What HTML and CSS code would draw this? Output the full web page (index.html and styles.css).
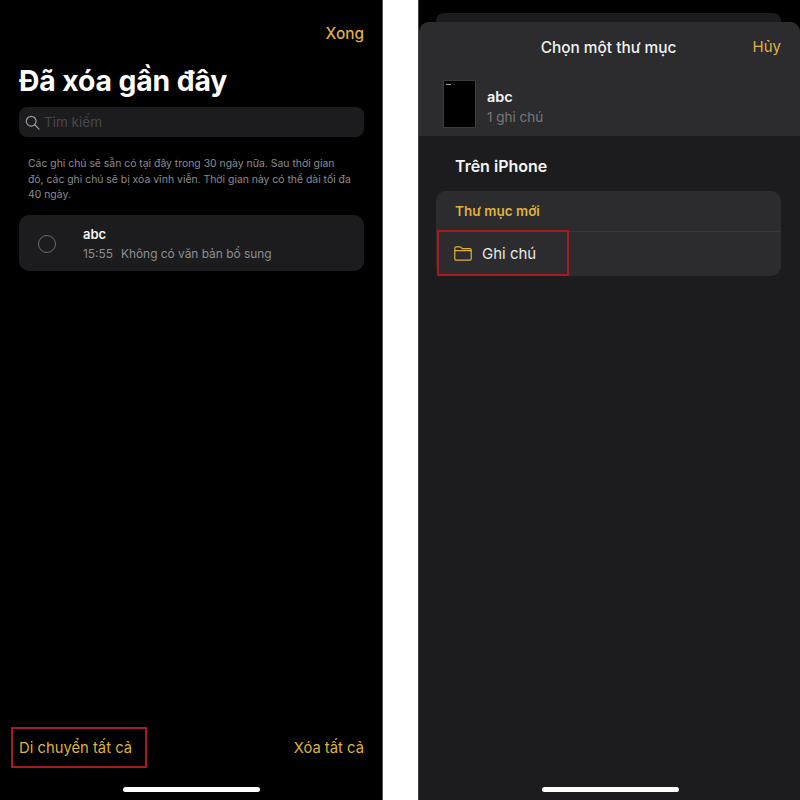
FILE: index.html
```html
<!DOCTYPE html>
<html lang="vi">
<head>
<meta charset="utf-8">
<title>Đã xóa gần đây</title>
<link rel="stylesheet" href="styles.css">
</head>
<body>
<main class="stage">
  <section class="phone phone-left">
    <div class="top-action"><span class="accent done">Xong</span></div>
    <h1 class="title">Đã xóa gần đây</h1>
    <div class="search">
      <svg class="search-icon" viewBox="0 0 16 16" fill="none" stroke="#9a9a9e" stroke-width="1.3" stroke-linecap="round"><circle cx="6.6" cy="6.6" r="5.2"/><path d="M10.4 10.4 15 15"/></svg>
      <span class="search-text">Tìm kiếm</span>
    </div>
    <p class="note">Các ghi chú sẽ sẵn có tại đây trong 30 ngày nữa. Sau thời gian đó, các ghi chú sẽ bị xóa vĩnh viễn. Thời gian này có thể dài tối đa 40 ngày.</p>
    <div class="note-card">
      <span class="radio"></span>
      <div class="note-body">
        <div class="note-name">abc</div>
        <div class="note-meta"><span>15:55</span><span>Không có văn bản bổ sung</span></div>
      </div>
    </div>
    <div class="toolbar">
      <span class="accent tool tool-marked">Di chuyển tất cả</span>
      <span class="accent tool">Xóa tất cả</span>
    </div>
    <div class="home-bar"></div>
  </section>

  <section class="phone phone-right">
    <div class="behind"></div>
    <div class="sheet">
      <div class="sheet-head">
        <div class="sheet-nav">
          <span class="sheet-title">Chọn một thư mục</span>
          <span class="accent cancel">Hủy</span>
        </div>
        <div class="selected">
          <div class="thumb"><span class="thumb-line"></span></div>
          <div>
            <div class="selected-name">abc</div>
            <div class="selected-count">1 ghi chú</div>
          </div>
        </div>
      </div>
      <h2 class="section-title">Trên iPhone</h2>
      <div class="folders">
        <div class="new-folder">Thư mục mới</div>
        <div class="folder-row">
          <svg class="folder-icon" viewBox="0 0 18 15" fill="none" stroke="#dfb23f" stroke-width="1.2" stroke-linejoin="round"><path d="M.8 3V2.2C.8 1.4 1.4.8 2.2.8h3.6c.5 0 .8.2 1.1.5L8.3 2.6h7.5c.8 0 1.4.6 1.4 1.4v8.8c0 .8-.6 1.4-1.4 1.4H2.2c-.8 0-1.4-.6-1.4-1.4V3Z"/><path d="M.8 4.7h16.4"/></svg>
          <span class="folder-name">Ghi chú</span>
        </div>
        <div class="highlight"></div>
      </div>
    </div>
    <div class="home-bar"></div>
  </section>
</main>
</body>
</html>
```
FILE: styles.css
```css
* { box-sizing: border-box; }
html, body { margin: 0; padding: 0; }
body {
  width: 800px;
  height: 800px;
  overflow: hidden;
  background: #fff;
  font-family: Inter, "Noto Sans", "Liberation Sans", sans-serif;
  color: #fff;
}
.stage {
  display: flex;
  justify-content: space-between;
  width: 800px;
  height: 800px;
}
.phone {
  position: relative;
  width: 382px;
  height: 800px;
  background: #000;
  display: flex;
  flex-direction: column;
}
.phone-left { padding: 0 18px 0 19px; border-right: 1px solid #555; width: 383px; }
.phone-right { border-left: 1px solid #444; }
.accent { color: #dfb23f; }

.top-action {
  display: flex;
  justify-content: flex-end;
  padding-top: 25px;
  height: 53px;
}
.done { font-size: 15.4px; font-weight: 500; line-height: 18px; }
.title {
  margin: 11px 0 0;
  font-size: 28.3px;
  line-height: 34px;
  font-weight: 700;
  letter-spacing: -0.1px;
  height: 43px;
}
.search {
  display: flex;
  align-items: center;
  gap: 4px;
  height: 30px;
  background: #1c1c1e;
  border-radius: 8px;
  padding-left: 6px;
}
.search-icon { width: 15px; height: 15px; flex: none; }
.search-text { font-size: 13.5px; color: #48484b; }
.note {
  margin: 19px 0 0;
  padding: 0 12px 0 9px;
  font-size: 10.4px;
  line-height: 15.5px;
  color: #8c8c90;
  height: 51px;
}
.note-card {
  margin-top: 8px;
  height: 56px;
  background: #1c1c1e;
  border-radius: 10px;
  display: flex;
  align-items: center;
  padding-left: 19px;
}
.radio {
  width: 18px;
  height: 18px;
  flex: none;
  border: 1px solid #6a6a6d;
  border-radius: 50%;
  margin-top: 1px;
}
.note-body { margin-left: 27px; }
.note-name { font-size: 13px; line-height: 18px; font-weight: 600; color: #f5f5f5; padding-top: 1px; }
.note-meta {
  display: flex;
  gap: 8px;
  margin-top: 2px;
  font-size: 11.9px;
  line-height: 17px;
  color: #8e8e92;
}
.toolbar {
  margin: auto 0 0 -8px;
  height: 41px;
  display: flex;
  justify-content: space-between;
  align-items: center;
  position: relative;
  top: -32px;
}
.tool { font-size: 14.8px; line-height: 20px; padding-top: 1px; }
.tool-marked {
  display: flex;
  align-items: center;
  height: 41px;
  width: 136px;
  padding: 1px 0 0 6px;
  border: 2px solid #a51c20;
}
.home-bar {
  position: absolute;
  left: 123px;
  bottom: 8px;
  width: 137px;
  height: 5px;
  border-radius: 3px;
  background: #fff;
}
.behind {
  margin: 13px 19px 0 17px;
  height: 9px;
  background: #1c1c1e;
  border-radius: 8px 8px 0 0;
}
.sheet {
  flex: 1;
  background: #1c1c1e;
  border-radius: 10px 10px 0 0;
  overflow: hidden;
}
.sheet-head { height: 114px; background: #2c2c2e; }
.sheet-nav {
  display: flex;
  justify-content: center;
  align-items: center;
  height: 50px;
  position: relative;
  padding-right: 2px;
}
.sheet-title { font-size: 15.4px; font-weight: 500; color: #f2f2f2; }
.cancel {
  position: absolute;
  right: 19px;
  top: 15px;
  font-size: 15px;
  line-height: 20px;
}
.selected {
  display: flex;
  align-items: flex-start;
  gap: 11px;
  padding: 8px 0 0 24px;
}
.thumb {
  width: 33px;
  height: 48px;
  background: #000;
  border: 1px solid #3d3d40;
  padding: 2px;
  flex: none;
}
.thumb-line { display: block; width: 5px; height: 1px; background: #aaa; margin-top: 1px; }
.selected-name { font-size: 14.5px; font-weight: 600; line-height: 18px; margin-top: 8px; color: #f5f5f5; }
.selected-count { font-size: 13.5px; line-height: 18px; margin-top: 2px; color: #77777b; }
.section-title {
  margin: 0;
  padding: 17px 0 0 36px;
  height: 55px;
  font-size: 16px;
  line-height: 26px;
  font-weight: 600;
  color: #f5f5f5;
}
.folders {
  position: relative;
  margin: 0 19px 0 17px;
  height: 85px;
  background: #2c2c2e;
  border-radius: 10px;
}
.new-folder {
  height: 41px;
  padding-left: 19px;
  font-size: 13.5px;
  font-weight: 600;
  line-height: 41px;
  color: #dfb23f;
  border-bottom: 1px solid #38383a;
}
.folder-row {
  display: flex;
  align-items: center;
  height: 44px;
  padding: 0 0 1px 18px;
  gap: 10px;
}
.folder-icon { width: 18px; height: 15px; flex: none; }
.folder-name { font-size: 15px; color: #e8e8e8; }
.highlight {
  position: absolute;
  left: 1px;
  top: 39px;
  width: 132px;
  height: 46px;
  border: 2px solid #a51c20;
}
```
